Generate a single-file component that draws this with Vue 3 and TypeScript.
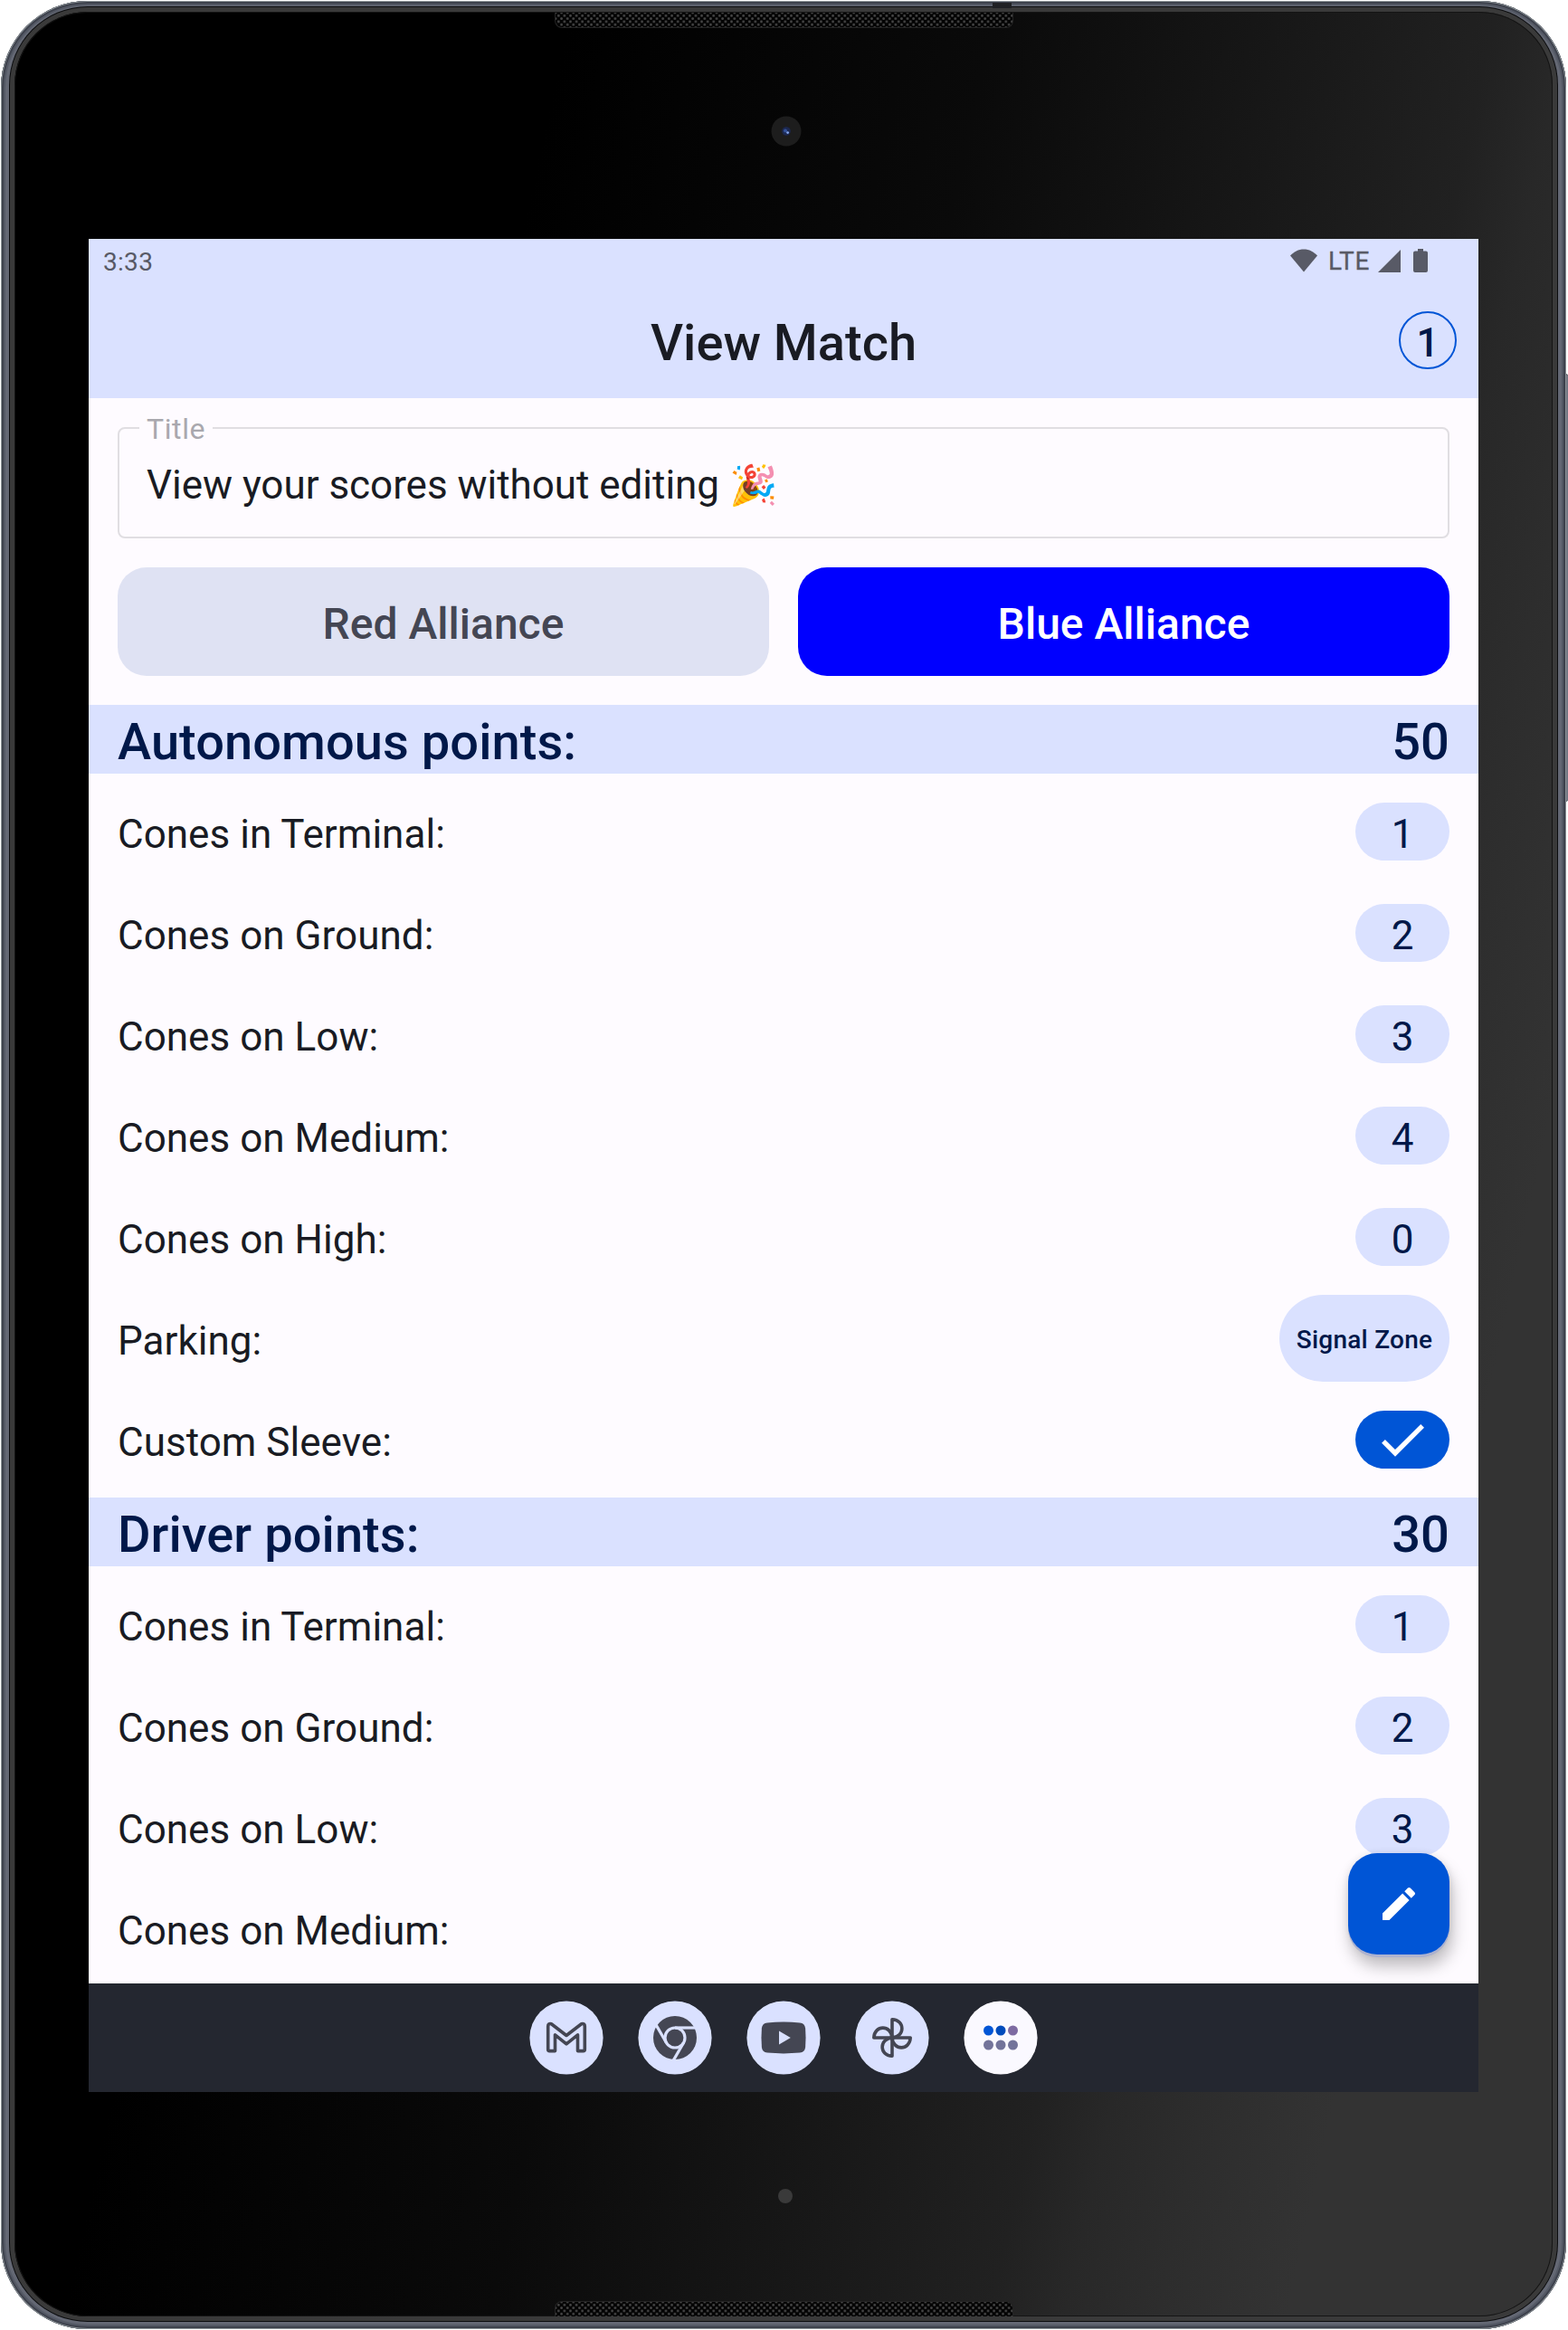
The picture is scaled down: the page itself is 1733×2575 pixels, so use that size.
<script setup lang="ts">
interface ScoreRow {
  label: string
  value?: string
  kind?: 'count' | 'zone' | 'check'
}

interface Section {
  title: string
  points: number
  rows: ScoreRow[]
}

const matchTitle = 'View your scores without editing'

const sections: Section[] = [
  {
    title: 'Autonomous points:',
    points: 50,
    rows: [
      { label: 'Cones in Terminal:', value: '1' },
      { label: 'Cones on Ground:', value: '2' },
      { label: 'Cones on Low:', value: '3' },
      { label: 'Cones on Medium:', value: '4' },
      { label: 'Cones on High:', value: '0' },
      { label: 'Parking:', value: 'Signal Zone', kind: 'zone' },
      { label: 'Custom Sleeve:', kind: 'check' },
    ],
  },
  {
    title: 'Driver points:',
    points: 30,
    rows: [
      { label: 'Cones in Terminal:', value: '1' },
      { label: 'Cones on Ground:', value: '2' },
      { label: 'Cones on Low:', value: '3' },
      { label: 'Cones on Medium:', value: '4' },
    ],
  },
]
</script>

<template>
  <div class="stage">
    <span class="side-button"></span>
    <div class="frame">
      <span class="antenna"></span>
      <div class="groove">
        <div class="rim">
          <div class="glass">
            <div class="bezel bezel-top">
              <span class="speaker speaker-top"></span>
              <svg class="camera" viewBox="0 0 34 34">
                <circle cx="17" cy="17" r="16.5" fill="#1d1d1d" />
                <circle cx="17" cy="17" r="4.8" fill="#1c2850" />
                <circle cx="16" cy="16.5" r="2" fill="#34529a" />
                <circle cx="18.6" cy="18.6" r="1.4" fill="#86a8ee" />
              </svg>
            </div>

            <div class="screen">
              <header class="top">
                <div class="status">
                  <span class="time">3:33</span>
                  <span class="status-icons">
                    <svg width="30" height="26" viewBox="0 0 30 26">
                      <path d="M0 7.6C4 3.2 9 .5 15 .5s11 2.700 15 7.100L15 25.500z" fill="#585a66" />
                    </svg>
                    <span class="lte">LTE</span>
                    <svg class="cell" width="25" height="25" viewBox="0 0 25 25">
                      <path d="M25 0v25H0z" fill="#585a66" />
                    </svg>
                    <svg class="battery" width="16" height="26" viewBox="0 0 16 26">
                      <path d="M5 0h6v2.500h3a2 2 0 0 1 2 2V24a2 2 0 0 1-2 2H2a2 2 0 0 1-2-2V4.500a2 2 0 0 1 2-2h3z" fill="#585a66" />
                    </svg>
                  </span>
                </div>
                <div class="appbar">
                  <h1>View Match</h1>
                  <span class="badge">1</span>
                </div>
              </header>

              <main class="content">
                <div class="field">
                  <span class="field-label">Title</span>
                  <span class="field-text">{{ matchTitle }} <span class="emoji">🎉</span></span>
                </div>

                <div class="alliances">
                  <button class="alliance red">Red Alliance</button>
                  <button class="alliance blue">Blue Alliance</button>
                </div>

                <section v-for="s in sections" :key="s.title" class="section">
                  <h2><span>{{ s.title }}</span><span>{{ s.points }}</span></h2>
                  <ul>
                    <li v-for="r in s.rows" :key="r.label">
                      <span class="row-label">{{ r.label }}</span>
                      <span class="pill" :class="r.kind ?? 'count'">
                        <svg v-if="r.kind === 'check'" width="64" height="64" viewBox="0 0 24 24">
                          <path d="M9 16.170 4.830 12l-1.420 1.410L9 19 21 7l-1.410-1.410z" fill="#fff" />
                        </svg>
                        <template v-else>{{ r.value }}</template>
                      </span>
                    </li>
                  </ul>
                </section>

                <button class="fab" aria-label="Edit">
                  <svg width="48" height="48" viewBox="0 0 24 24">
                    <path
                      fill="#fff"
                      d="M3 17.250V21h3.750L17.810 9.940l-3.750-3.750L3 17.250zM20.710 7.040c.390-.390.390-1.020 0-1.410l-2.340-2.340c-.390-.390-1.020-.390-1.410 0l-1.830 1.830 3.750 3.750 1.830-1.830z"
                    />
                  </svg>
                </button>
              </main>

              <nav class="taskbar">
                <span class="app">
                  <svg width="80" height="80" viewBox="-40 -40 80 80">
                    <path
                      d="M-20.300 -12.500Q-20.300 -16.200 -16.600 -15.300L0 -2.500L16.600 -15.300Q20.300 -16.200 20.300 -12.500V13Q20.300 14.600 18.500 14.600H12.500V-3.200L0 6.800L-12.500 -3.200V14.600H-18.500Q-20.300 14.600 -20.300 13Z"
                      fill="none" stroke="#444653" stroke-width="3.600" stroke-linejoin="round"
                    />
                  </svg>
                </span>
                <span class="app">
                  <svg width="80" height="80" viewBox="-40 -40 80 80">
                    <circle r="24" fill="#444653" />
                    <g fill="none" stroke="#dae1ff" stroke-width="3.200">
                      <circle r="11" />
                      <path v-for="a in [0, 120, 240]" :key="a" d="M0-11H25" :transform="`rotate(${a})`" />
                    </g>
                  </svg>
                </span>
                <span class="app">
                  <svg width="80" height="80" viewBox="-40 -40 80 80">
                    <path
                      d="M-18-16.600Q0-18.200 18-16.600Q23.600-16 24.100-10.500Q25-0 24.100 10.500Q23.600 16 18 16.600Q0 18.200-18 16.600Q-23.600 16-24.100 10.500Q-25 0-24.100-10.500Q-23.600-16-18-16.600Z"
                      fill="#444653"
                    />
                    <path d="M-5-7.400L7.800 0L-5 7.400Z" fill="#dae1ff" />
                  </svg>
                </span>
                <span class="app">
                  <svg width="80" height="80" viewBox="-40 -40 80 80">
                    <path
                      v-for="a in [0, 90, 180, 270]" :key="a" :transform="`rotate(${a})`"
                      d="M0 0V-20.200C14.500-19.500 14.500-1 0 0Z"
                      fill="none" stroke="#444653" stroke-width="3.600" stroke-linejoin="round"
                    />
                  </svg>
                </span>
                <span class="app all">
                  <svg width="80" height="80" viewBox="-40 -40 80 80">
                    <circle cx="-13.500" cy="-8" r="5.500" fill="#0055d6" />
                    <circle cx="0" cy="-8" r="5.500" fill="#004cbc" />
                    <circle cx="13.500" cy="-8" r="5.500" fill="#7d6ba2" />
                    <circle v-for="x in [-13.5, 0, 13.5]" :key="x" :cx="x" cy="8" r="5.500" fill="#73749a" />
                  </svg>
                </span>
              </nav>
            </div>

            <div class="bezel bezel-bottom">
              <span class="led"></span>
              <span class="speaker speaker-bottom"></span>
            </div>
          </div>
        </div>
      </div>
    </div>
  </div>
</template>

<style>
body {
  margin: 0;
  background: #fff;
}
</style>

<style scoped>
* {
  box-sizing: border-box;
}

.stage {
  position: relative;
  width: 1733px;
  height: 2575px;
  padding: 1px 2px 1px 1px;
  overflow: hidden;
  background: #fff;
  font-family: Roboto, "Noto Sans", sans-serif;
  color: #191b23;
}

.frame {
  position: relative;
  width: 1730px;
  height: 2573px;
  padding: 6px 9px 8px 9px;
  border-radius: 96px;
  background: #646874;
  box-shadow:
    inset 0 0 0 1px #8a9195,
    inset 0 0 0 3px #3d414c,
    inset 0 0 0 5px #545965,
    inset 0 0 0 6px #646874;
}

.antenna {
  position: absolute;
  left: 1096px;
  top: 2px;
  width: 21px;
  height: 6px;
  background: #202124;
}

.side-button {
  position: absolute;
  left: 1728px;
  top: 413px;
  width: 5px;
  height: 473px;
  border: 1px solid #30343c;
  border-width: 1px 0 1px 1px;
  border-radius: 0 3px 3px 0;
  background: #737783;
}

.groove {
  height: 100%;
  padding: 1px;
  border-radius: 87px;
  background: #0b0c0e;
}

.rim {
  height: 100%;
  padding: 5px;
  border-radius: 86px;
  background: #3a3a3a;
}

.glass {
  display: flex;
  flex-direction: column;
  align-items: center;
  height: 100%;
  overflow: hidden;
  border-radius: 81px;
  box-shadow: inset 0 0 0 1px #141414;
  background: linear-gradient(102.4deg, #000 600px, #0a0a0a 1060px, #161616 1340px, #212121 1600px, #282828 1680px, #2d2d2d 1780px, #333 1920px);
}

.bezel {
  position: relative;
  display: flex;
  flex: none;
  width: 100%;
  justify-content: center;
}

.bezel-top {
  height: 251px;
  padding-top: 115px;
}

.bezel-bottom {
  flex: 1;
  padding-top: 107px;
}

.camera {
  width: 34px;
  height: 34px;
  margin-left: 5px;
}

.led {
  width: 16px;
  height: 16px;
  margin-left: 4px;
  border-radius: 50%;
  background: #3a3a3a;
}

.speaker {
  position: absolute;
  left: 597px;
  width: 507px;
  border: 1px solid #242424;
  background-color: #030303;
  background-image:
    radial-gradient(circle, #454545 1px, transparent 1.7px),
    radial-gradient(circle, #454545 1px, transparent 1.7px);
  background-size: 6.6px 6.6px;
  background-position: 0 0, 3.3px 3.3px;
}

.speaker-top {
  top: 1px;
  height: 17px;
  border-top: 0;
  border-radius: 0 0 8px 8px;
}

.speaker-bottom {
  bottom: 0;
  height: 17px;
  border-bottom: 0;
  border-radius: 8px 8px 0 0;
}

.screen {
  display: flex;
  flex: none;
  flex-direction: column;
  width: 1536px;
  height: 2048px;
  background: #fefbff;
}

.top {
  flex: none;
  height: 176px;
  background: #dae1ff;
}

.status {
  display: flex;
  justify-content: space-between;
  height: 48px;
  padding: 0 56px 0 16px;
  font-size: 28px;
  line-height: 52px;
  color: #585a66;
}

.time {
  letter-spacing: 0.3px;
}

.status-icons {
  display: flex;
  padding-top: 11px;
}

.lte {
  margin: -12px 9px 0 12px;
  width: 46px;
  letter-spacing: 0.7px;
  -webkit-text-stroke: 0.3px #585a66;
}

.cell {
  margin-top: 1px;
}

.battery {
  margin-left: 14px;
}

.appbar {
  display: grid;
  grid-template-columns: 64px 1fr 64px;
  align-items: center;
  height: 128px;
  padding: 0 24px;
}

h1 {
  grid-column: 2;
  margin: 6px 0 0;
  font-size: 56px;
  font-weight: 500;
  line-height: 72px;
  text-align: center;
}

.badge {
  height: 64px;
  border: 2px solid #0055d6;
  border-radius: 50%;
  font-size: 44px;
  font-weight: 500;
  line-height: 66px;
  text-align: center;
  color: #001849;
}

.content {
  position: relative;
  flex: none;
  height: 1752px;
  overflow: hidden;
}

.field {
  position: relative;
  height: 123px;
  margin: 32px 32px 0;
  padding: 0 30px;
  border: 2px solid #e0dee2;
  border-radius: 8px;
  font-size: 44px;
  line-height: 124px;
}

.field-text {
  letter-spacing: -0.03px;
}

.field-label {
  position: absolute;
  left: 22px;
  top: -20px;
  padding: 0 8px;
  background: #fefbff;
  font-size: 32px;
  line-height: 40px;
  letter-spacing: 0.6px;
  color: #a9a8ae;
}

.emoji {
  font-size: 43px;
}

.alliances {
  display: flex;
  gap: 32px;
  margin: 32px 32px 0;
}

.alliance {
  flex: 1;
  height: 120px;
  padding: 6px 0 0;
  border: 0;
  border-radius: 32px;
  font: 500 48px/56px Roboto, sans-serif;
}

.red {
  background: #dfe2f3;
  color: #444653;
}

.blue {
  background: #00f;
  color: #fff;
}

h2 {
  display: flex;
  justify-content: space-between;
  height: 76px;
  margin: 0;
  padding: 0 32px;
  background: #dae1ff;
  font-size: 56px;
  font-weight: 500;
  line-height: 82px;
  letter-spacing: 0.06px;
  color: #001849;
}

.alliances + .section {
  margin-top: 32px;
}

ul {
  margin: 0;
  padding: 8px 32px;
  list-style: none;
}

li {
  display: flex;
  align-items: center;
  justify-content: space-between;
  height: 112px;
  font-size: 44px;
}

.row-label {
  margin-top: 5px;
  letter-spacing: 0.03px;
}

.pill {
  display: flex;
  align-items: center;
  justify-content: center;
  width: 104px;
  height: 64px;
  padding-top: 6px;
  border-radius: 32px;
  background: #dae1ff;
  color: #001849;
}

.zone {
  width: 188px;
  height: 96px;
  padding-top: 2px;
  border-radius: 48px;
  font-size: 28px;
  font-weight: 500;
  letter-spacing: 0.25px;
}

.check {
  padding: 0;
  background: #0055d6;
}

.fab {
  position: absolute;
  right: 32px;
  bottom: 32px;
  display: flex;
  align-items: center;
  justify-content: center;
  width: 112px;
  height: 112px;
  padding: 0;
  border: 0;
  border-radius: 32px;
  background: #0055d6;
  box-shadow: 0 3px 0 #adb2cf, 3px 13px 18px rgba(0, 0, 0, 0.26), 0 0 8px rgba(0, 0, 0, 0.08);
}

.taskbar {
  display: flex;
  flex: none;
  align-items: center;
  justify-content: center;
  gap: 40px;
  height: 120px;
  background: #242730;
}

.app {
  width: 80px;
  height: 80px;
  border-radius: 50%;
  background: #dae1ff;
  box-shadow: 0 0 0 0.6px #dae1ff;
}

.app svg {
  display: block;
}

.all {
  background: #faf9ff;
  box-shadow: 0 0 0 0.6px #faf9ff;
}
</style>
